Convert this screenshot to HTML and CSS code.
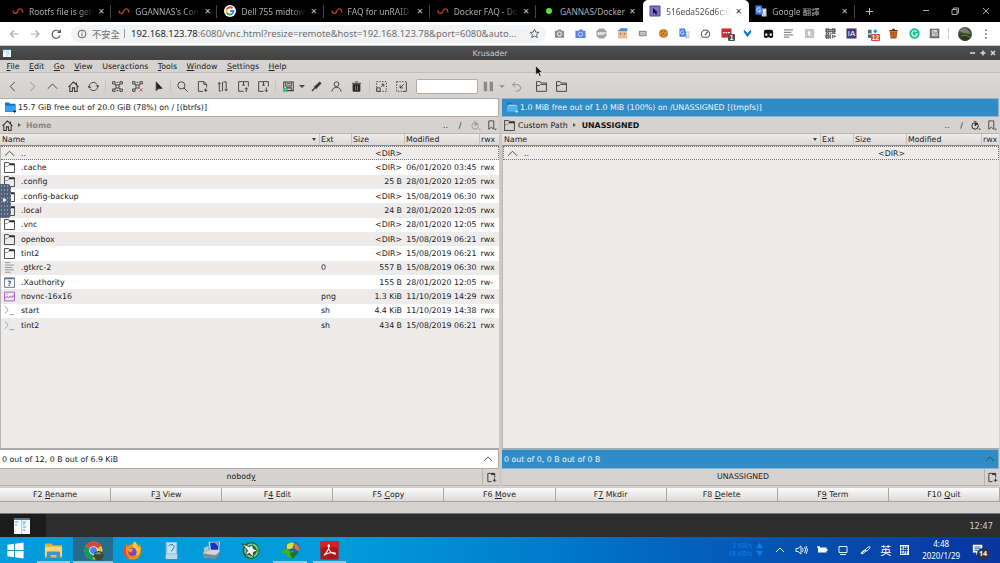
FILE: index.html
```html
<!DOCTYPE html>
<html lang="zh-Hant">
<head>
<meta charset="utf-8">
<title>Krusader</title>
<link rel="stylesheet" href="styles.css">
</head>
<body>
<svg class="defs" width="0" height="0">
  <symbol id="unraid" viewBox="0 0 12 12"><path d="M1 5.500c0 4 4 3.500 4.800 0.500s5-3 5 1.500" fill="none" stroke="#b5401f" stroke-width="1.300"/></symbol>
  <symbol id="folder" viewBox="0 0 12 12"><path d="M.6 11.500V.6h4.500l1 1.400h5.300v9.500z" fill="none" stroke="#3a3d40" stroke-width="1"/><path d="M6 1.500h5.500v2H5z" fill="#2b2e31"/><path d="M.8 5h3l1.500-2" fill="none" stroke="#777" stroke-width=".8"/></symbol>
  <symbol id="fold2" viewBox="0 0 12 12"><path d="M.6 11.300V.7h4l1 1.500h5.800v9.100zM.7 5h3l1.300-1.300h6.300" fill="none" stroke="#3a3d40" stroke-width="1"/></symbol>
  <symbol id="up" viewBox="0 0 12 12"><path d="M1 8.500 6 3.500l5 5" fill="none" stroke="#3a3d40" stroke-width="1"/></symbol>
  <symbol id="home" viewBox="0 0 12 12"><path d="M.6 6.500 6 1l5.400 5.500M2 5.500v5.900h2.800V7.500h2.400v3.900H10V5.500M9.200 1.500v2.500" fill="none" stroke="#303336" stroke-width="1.100"/></symbol>
  <symbol id="newtab" viewBox="0 0 12 12"><path d="M6 10.500H2v-9h7.500v4.500" fill="none" stroke="#333" stroke-width="1"/><path d="M5.500 1.500h4v1.700h-4z" fill="#333"/><path d="M9.300 7v4M7.300 9h4" stroke="#333"/></symbol>
  <symbol id="clock" viewBox="0 0 12 12"><circle cx="5.500" cy="6.500" r="3.500" fill="none" stroke="currentColor"/><path d="M5.500 6.500V3.500h3zM4 1.500h3" fill="currentColor" stroke="currentColor" stroke-width=".7"/><path d="M9 9.500h3L10.500 11z" fill="currentColor"/></symbol>
  <symbol id="mark" viewBox="0 0 12 12"><path d="M3 1h5.500v9L5.800 8 3 10z" fill="none" stroke="#444"/><path d="M9 9.500h3L10.500 11.300z" fill="#444"/></symbol>
  <symbol id="disk" viewBox="0 0 12 12"><path d="M0 .5h4.500l1 1.500h6V11H0z" fill="#1572c4"/><path d="M0 4h11.500v6.500H0z" fill="#39a0ee"/><path d="M8.500 9.500h4L10.500 12z" fill="#123"/></symbol>
  <symbol id="diskl" viewBox="0 0 12 12"><path d="M0 .5h4.500l1 1.500h6V5H0z" fill="#1a6fb5"/><path d="M0 3.500h11.500v7H0z" fill="#4db2f6"/><path d="M1.500 3.500h9" stroke="#d6edfb"/><path d="M8.500 9.500h4L10.500 12z" fill="#d6edfb"/></symbol>
  <symbol id="script" viewBox="0 0 12 12"><path d="M1 1.500l3.500 4L1 9.500M6 10.500h5" fill="none" stroke="#8793a0" stroke-width=".9"/></symbol>
  <symbol id="win" viewBox="0 0 16 16"><path fill="#f7fafc" d="M0 0h16v16H0z"/><path fill="#4b789f" d="M0 0h16v2H0z"/><path d="M7.700 2v14" stroke="#aabac6"/><path d="M1 4h3M1 7h2M9 4h3M9 6h2M9 9h3M9 12h2" stroke="#3ba1e0"/></symbol>
  <symbol id="trans" viewBox="0 0 12 12"><path d="M5 3.500h6.500v8H7z" fill="#cbd1d9"/><path d="M.5.5h6l2.500 9h-8.500z" fill="#4680ea"/><path d="M5.500 3.800a2 2 0 1 0 .2 1.700H4M7.500 6h3M9 5v1c0 2-1 3-2 3.500M8 7l2 2" stroke="#fff" fill="none" stroke-width=".8"/></symbol>
</svg>

<header class="tabs">
  <div class="tab"><svg class="i12"><use href="#unraid"/></svg><span>Rootfs file is gett</span><b>✕</b></div>
  <div class="tab"><svg class="i12"><use href="#unraid"/></svg><span>GGANNAS's Con</span><b>✕</b></div>
  <div class="tab"><svg class="i12" viewBox="0 0 12 12"><circle cx="6" cy="6" r="6" fill="#fff"/><g fill="none" stroke-width="1.800"><path d="M8.600 3.300A3.600 3.600 0 0 0 2.800 4.300" stroke="#ea4335"/><path d="M2.800 4.300a3.600 3.600 0 0 0 0 3.400" stroke="#fbbc05"/><path d="M2.800 7.700a3.600 3.600 0 0 0 5.400 1" stroke="#34a853"/><path d="M8.200 8.700A3.600 3.600 0 0 0 9.500 6H6" stroke="#4285f4"/></g></svg><span>Dell 755 midtowe</span><b>✕</b></div>
  <div class="tab"><svg class="i12"><use href="#unraid"/></svg><span>FAQ for unRAID</span><b>✕</b></div>
  <div class="tab"><svg class="i12"><use href="#unraid"/></svg><span>Docker FAQ - Do</span><b>✕</b></div>
  <div class="tab last"><svg class="i12" viewBox="0 0 12 12"><circle cx="6" cy="6" r="3" fill="#56e33a"/></svg><span>GANNAS/Docker</span><b>✕</b></div>
  <div class="tab active"><svg class="i12" viewBox="0 0 12 12"><path d="M1 1h10v10H1z" fill="#7a78c8" stroke="#4d4b96"/><path d="M4 3v6l1.500-1.500L7 10l1-.5-1-2h2z" fill="#111"/></svg><span>516eda526d6c:0</span><b>✕</b></div>
  <div class="tab"><svg class="i12"><use href="#trans"/></svg><span class="cjk">Google 翻譯</span><b>✕</b></div>
  <svg class="plus" viewBox="0 0 10 10"><path d="M5 1v8M1 5h8" stroke="#bbb" stroke-width="1.200"/></svg>
  <svg class="wc" viewBox="0 0 74 12"><g stroke="#bbb" fill="none" stroke-width=".9"><path d="M4 5.500h6M64 3l6 6M70 3l-6 6M33 4.500h5v5h-5zM34.500 4.500V3H39.500v5H38"/></g></svg>
</header>

<nav class="addr">
  <svg class="nav" viewBox="0 0 66 14"><g fill="none" stroke-width="1.200"><path d="M12.500 7H4.500M8 3.500 4.500 7 8 10.500M25 7h8M29.500 3.500 33 7l-3.500 3.500" stroke="#a9abad"/><path d="M53.500 5A4 4 0 1 0 54 8.500" stroke="#5b5e62"/></g><path d="M55 2v4h-4z" fill="#5b5e62"/></svg>
  <div class="omni">
    <svg class="info" viewBox="0 0 10 10"><circle cx="5" cy="5" r="3.900" fill="none" stroke="#5f6368"/><path d="M5 4.300v3M5 2.500v1" stroke="#5f6368"/></svg>
    <span class="unsafe">不安全</span><i></i>
    <span class="url"><em>192.168.123.78</em>:6080/vnc.html?resize=remote&amp;host=192.168.123.78&amp;port=6080&amp;auto...</span>
    <svg class="star" viewBox="0 0 12 12"><path d="M6 1.300l1.400 3.200 3.400.3-2.600 2.300.8 3.400L6 8.700l-3 1.800.8-3.400L1.200 4.800l3.400-.3z" fill="none" stroke="#55585c"/></svg>
  </div>
  <div class="ext">
    <svg viewBox="0 0 12 12"><path d="M1 3h2.500l1-1.500h3l1 1.500H11v7.500H1z" fill="#8d8d8d"/><circle cx="6" cy="6.500" r="2.200" fill="none" stroke="#fff"/></svg>
    <svg viewBox="0 0 12 12"><path d="M.5 3H4l1-1.500h3L9 3h2.500v8H.5z" fill="#5b82e4"/><circle cx="6" cy="6.800" r="2.300" fill="none" stroke="#cfe0ff"/></svg>
    <svg viewBox="0 0 12 12"><path d="M3.500.5h5l3 3v5l-3 3h-5l-3-3v-5z" fill="#a2a2a2"/><text x="6" y="7.800" class="abp">ABP</text></svg>
    <svg viewBox="0 0 12 12"><path d="M1 3h10v8.500H1z" fill="#e9bb98"/><path d="M1.500 2.500h9V1h-6V0" stroke="#3a8edb" stroke-width="1.500" fill="none"/><path d="M3.500 6.300h1M7.500 6.300h1" stroke="#222" stroke-width="1.300"/></svg>
    <svg viewBox="0 0 12 12"><rect x="2" y="3" width="8.500" height="6" rx="1" fill="#929292"/><path d="M4 5h4.500v2H4z" stroke="#fff" fill="none" stroke-width=".7"/></svg>
    <svg viewBox="0 0 12 12"><circle cx="6" cy="6" r="5" fill="#dc8a30"/><path d="M3.500 4h1M7 3.500h1M5.500 6h1M3.500 8h1M8 7.500h1" stroke="#693712" stroke-width="1.200"/></svg>
    <svg viewBox="0 0 12 12"><use href="#trans"/></svg>
    <svg viewBox="0 0 12 12"><path d="M3 10a4.500 4.500 0 1 1 6 0z" fill="none" stroke="#555" stroke-width="1.100"/><path d="M5.500 7.500 8.500 4" stroke="#444" stroke-width="1.200"/></svg>
    <span class="bdg dark"><svg viewBox="0 0 12 12"><path d="M.5.5h11v10H.5z" fill="#d32c2c"/><path d="M2 5h8" stroke="#fff" stroke-width="1.300" stroke-dasharray="2 .8"/></svg><b>1</b></span>
    <svg viewBox="0 0 12 12"><path d="M2.500 2.500 6 6l3.500-3.500v2L6 9.500 2.500 4.500z" fill="#1b79cc" stroke="#1b79cc"/></svg>
    <svg viewBox="0 0 12 12"><path d="M1 4q0-2 2-2h6q2 0 2 2v5q0 2-2 2H8l-1-1H5l-1 1H3q-2 0-2-2z" fill="#111"/><path d="M2.500 6h2.200v2.500H2.500zM7.300 6h2.200v2.500H7.300z" fill="#fff"/></svg>
    <svg viewBox="0 0 12 12"><path d="M1 2h10M1 4.700h8M1 7.400h10M1 10h6" stroke="#8b8f90" stroke-width="1.400"/></svg>
    <svg viewBox="0 0 12 12"><rect x="1" y="1" width="10" height="10" rx="1" fill="#c4c4c4"/><path d="M5 3v5M7.500 5.500 6 4.500v3l2 1" stroke="#fff" fill="none"/></svg>
    <svg viewBox="0 0 12 12"><path d="M1 1h3.500v3.500H1zM7.500 1H11v3.500H7.500zM1 7.500h3.500V11H1z" fill="#999" stroke="#333"/><path d="M6 1v5M1 6h4M7 6h5M6 7v5M8 7.500v4M10 8v3M8 9h4" stroke="#333" stroke-dasharray="1.500 .7"/></svg>
    <svg viewBox="0 0 12 12"><path d="M.5.5h11v11H.5z" fill="#4f3580"/><text x="6" y="9" class="ia">IA</text></svg>
    <span class="bdg red"><svg viewBox="0 0 12 12"><path d="M1 2h4v4H1zM1 7h4v4H1z" fill="#5c6873"/><path d="M6.500 3.500 9 1l2.500 2.500L9 6z" fill="#18a7e8"/></svg><b>12</b></span>
    <svg viewBox="0 0 12 12"><path d="M2 4h8l-.7 7.500H2.700z" fill="#a94f1c"/><path d="M1.500 3h9M4.500 1.500h3" stroke="#6e3211" stroke-width="1.500"/><path d="M4.500 5v5M7.500 5v5" stroke="#e0823c"/></svg>
    <svg viewBox="0 0 12 12"><circle cx="6" cy="6" r="5.600" fill="#15c39a"/><path d="M8.300 4A3 3 0 1 0 9 6.500H6.800" fill="none" stroke="#fff" stroke-width="1.200"/></svg>
    <svg viewBox="0 0 12 12"><path d="M.8.8h10.400v10.400H.8z" fill="#6b6b6b"/><path d="M9 2.800H3.500v2.700H9v3H3M3 7h4M5 4h4" fill="none" stroke="#fff" stroke-width=".9"/></svg>
  </div>
  <i class="vsep"></i>
  <svg class="ava" viewBox="0 0 14 14"><circle cx="7" cy="7" r="7" fill="#445238"/><path d="M1 4q5-6 10 0l1 3-6-1z" fill="#7d7d80"/><path d="M1 8q5-3 12 0-1 5-6 6-4-1-6-6" fill="#2c3b1f"/><path d="M3 9l5-1 4 2" stroke="#718e45" fill="none"/></svg>
  <svg class="dots" viewBox="0 0 4 12"><path d="M2 1.500v10" stroke="#55585c" stroke-width="1.500" stroke-dasharray="1.500 2.300"/></svg>
</nav>

<main class="app">
  <div class="title"><svg class="ticon"><use href="#win"/></svg><span>Krusader</span><svg class="tbtn" viewBox="0 0 28 8"><path d="M1 4h5M11.500 4h5M14 1.500v5M22 2l4 4M26 2l-4 4" stroke="#ddd" stroke-width="1.400"/></svg></div>
  <div class="menu"><span><u>F</u>ile</span><span><u>E</u>dit</span><span><u>G</u>o</span><span><u>V</u>iew</span><span>User<u>a</u>ctions</span><span><u>T</u>ools</span><span><u>W</u>indow</span><span><u>S</u>ettings</span><span><u>H</u>elp</span></div>

  <div class="tools">
    <div class="grp g1">
      <svg viewBox="0 0 12 12"><path d="M8.500 1 3.500 6l5 5"/></svg>
      <svg viewBox="0 0 12 12" class="dim"><path d="M3.500 1l5 5-5 5"/></svg>
      <svg viewBox="0 0 12 12"><path d="M.8 8.500 6 3.300l5.200 5.200"/></svg>
      <svg viewBox="0 0 12 12"><use href="#home"/></svg>
      <svg viewBox="0 0 12 12"><path d="M1.500 7.500A4.700 4.700 0 0 1 9.500 3M10.500 4.500A4.700 4.700 0 0 1 2.500 9M.2 5.500 1.500 7.800l2-1.500M11.800 6.500 10.500 4.300 8.500 5.700"/></svg>
    </div>
    <div class="grp g2">
      <svg viewBox="0 0 12 12"><path d="M.7.7h2.600v2.600H.7zM8.700.7h2.600v2.600H8.700zM.7 8.700h2.600v2.600H.7zM8.700 8.700h2.600v2.600H8.700zM4.300 4.300h3.400v3.400H4.300zM3.300 3.300l1 1M8.700 3.300l-1 1M3.300 8.700l1-1M8.700 8.700l-1-1M5 1.500h2M5 10.500h2"/></svg>
      <svg viewBox="0 0 12 12"><path d="M.7.7h2.600v2.600H.7zM8.700.7h2.600v2.600H8.700zM.7 8.700h2.600v2.600H.7zM4.300 4.300h3.400v3.400H4.300zM3.300 3.300l1 1M8.700 3.300l-1 1M3.300 8.700l1-1M5 1.500h2"/><path d="M8 8l3.500 3.500M11.500 8 8 11.500" style="stroke:#da4453"/></svg>
      <svg viewBox="0 0 12 12"><path d="M3.500 1v9.500l2-2 4.500-.5z" fill="#222"/></svg>
    </div>
    <div class="grp g3">
      <svg viewBox="0 0 12 12"><circle cx="4.800" cy="4.800" r="3.900"/><path d="M7.600 7.600 11.700 11.700"/></svg>
      <svg viewBox="0 0 12 12"><path d="M6.500 11.300H1.500V.7h6l3 3V7M7.500.7v3h3M9.500 8v4M7.500 10h4"/></svg>
      <svg viewBox="0 0 12 12"><path d="M2.500 2v9h2M1 3.500 2.500 1.500 4 3.500M7 1h3v9M8.500 9 10 11l1.500-2M6 11V1"/></svg>
      <svg viewBox="0 0 12 12"><path d="M6 11.300H.7V.7h10.600V6M6 .7v4M4.500 4.500h3M9 12V7.500M7.200 9 9 7.300 10.800 9"/></svg>
      <svg viewBox="0 0 12 12"><path d="M6 11.300H.7V.7h10.600V6M6 .7v4M4.500 4.500h3M9 7v4.500M7.200 10 9 11.700 10.800 10"/></svg>
    </div>
    <div class="grp g4">
      <svg viewBox="0 0 12 12"><path d="M.8 1h10.400v9.500H.8zM3 1v4.500h6V1M4 10V7.500h5V10M4.500 3h3" stroke-width="1.100"/><path d="M0 8h4.500v4H0z" fill="#2ecc71" style="stroke:none"/></svg>
      <s></s>
      <svg viewBox="0 0 12 12"><path d="M1 11l3-3M4 6.500 9.500 1.500 10.500 2.500 5.500 8z" fill="#222" stroke-width="1.500"/></svg>
      <svg viewBox="0 0 12 12"><circle cx="6" cy="3.500" r="2.600"/><path d="M1 11.500c0-6 10-6 10 0"/></svg>
      <svg viewBox="0 0 12 12"><path d="M2.200 3.500h7.600v7.700H2.200z" fill="#222"/><path d="M1 2.500h10M4.500 1h3"/><path d="M5 5v5M7 5v5" style="stroke:#888"/></svg>
    </div>
    <div class="grp g5">
      <svg viewBox="0 0 12 12"><path d="M.7.7h10.600v10.600H.7z" stroke-dasharray="1.500 1.500"/><path d="M.7 7.500h3.800v3.800H.7zM5.500 6.500 8.500 3.500M6 3.500h2.500V6"/></svg>
      <svg viewBox="0 0 12 12"><path d="M.7 .7h10M.7.7v10.600h6" stroke-dasharray="1.500 1.500"/><path d="M7.500 11.300h3.800V1M4.500 4.500v3h3M4.500 7.500l4-4"/></svg>
    </div>
    <div class="field"></div>
    <div class="grp g6">
      <svg viewBox="0 0 12 12"><path d="M.8.8h3.700v10.400H.8zM7.200.8h3.700v10.400H7.200z" fill="#8d8b89" style="stroke:none"/></svg>
      <s class="dim"></s>
      <svg viewBox="0 0 12 12" class="dim"><path d="M2 4h5a3.500 3.500 0 0 1 0 7H5M4.500 1 1.700 4l2.800 3"/></svg>
    </div>
    <div class="grp g7"><svg viewBox="0 0 12 12"><use href="#fold2"/></svg><svg viewBox="0 0 12 12"><use href="#fold2"/></svg></div>
  </div>

  <div class="panels">
    <section class="panel left">
      <div class="media"><svg class="i11"><use href="#disk"/></svg>15.7 GiB free out of 20.0 GiB (78%) on / [(btrfs)]</div>
      <div class="path"><svg class="i11"><use href="#home"/></svg><i></i><b>Home</b><div class="pt"><span>..</span><span>/</span><svg class="i11 off"><use href="#clock"/></svg><svg class="i11"><use href="#mark"/></svg></div></div>
      <div class="row head"><span>Name</span><span>Ext</span><span>Size</span><span>Modified</span><span>rwx</span></div>
      <div class="list">
        <div class="row cur"><svg class="i11"><use href="#up"/></svg><span>..</span><span></span><span>&lt;DIR&gt;</span><span></span><span></span></div>
        <div class="row"><svg class="i11"><use href="#folder"/></svg><span>.cache</span><span></span><span>&lt;DIR&gt;</span><span>06/01/2020 03:45</span><span>rwx</span></div>
        <div class="row"><svg class="i11"><use href="#folder"/></svg><span>.config</span><span></span><span>25 B</span><span>28/01/2020 12:05</span><span>rwx</span></div>
        <div class="row"><svg class="i11"><use href="#folder"/></svg><span>.config-backup</span><span></span><span>&lt;DIR&gt;</span><span>15/08/2019 06:30</span><span>rwx</span></div>
        <div class="row"><svg class="i11"><use href="#folder"/></svg><span>.local</span><span></span><span>24 B</span><span>28/01/2020 12:05</span><span>rwx</span></div>
        <div class="row"><svg class="i11"><use href="#folder"/></svg><span>.vnc</span><span></span><span>&lt;DIR&gt;</span><span>28/01/2020 12:05</span><span>rwx</span></div>
        <div class="row"><svg class="i11"><use href="#folder"/></svg><span>openbox</span><span></span><span>&lt;DIR&gt;</span><span>15/08/2019 06:21</span><span>rwx</span></div>
        <div class="row"><svg class="i11"><use href="#folder"/></svg><span>tint2</span><span></span><span>&lt;DIR&gt;</span><span>15/08/2019 06:21</span><span>rwx</span></div>
        <div class="row"><svg class="i11" viewBox="0 0 12 12"><path d="M1 .7h6M1 3.300h10M1 6h8M1 8.600h10M1 11.200h6" stroke="#7d8894" stroke-width=".9"/></svg><span>.gtkrc-2</span><span>0</span><span>557 B</span><span>15/08/2019 06:30</span><span>rwx</span></div>
        <div class="row"><svg class="i11" viewBox="0 0 12 12"><path d="M.6 1h10.800v10.300H.6z" fill="none" stroke="#60758c"/><path d="M.6 1h10.800v1.500H.6z" fill="#60758c"/><text x="6" y="10" class="q">?</text></svg><span>.Xauthority</span><span></span><span>155 B</span><span>28/01/2020 12:05</span><span>rw-</span></div>
        <div class="row"><svg class="i11" viewBox="0 0 12 12"><path d="M.6 1.200h10.800v9.600H.6zM.8 8l2.500-2 2 1.500 1.500-2L8.500 7l1.500-2 1.300 2M3 3.500h1" fill="none" stroke="#9b59d0"/></svg><span>novnc-16x16</span><span>png</span><span>1.3 KiB</span><span>11/10/2019 14:29</span><span>rwx</span></div>
        <div class="row"><svg class="i11"><use href="#script"/></svg><span>start</span><span>sh</span><span>4.4 KiB</span><span>11/10/2019 14:38</span><span>rwx</span></div>
        <div class="row"><svg class="i11"><use href="#script"/></svg><span>tint2</span><span>sh</span><span>434 B</span><span>15/08/2019 06:21</span><span>rwx</span></div>
      </div>
      <div class="stat"><span>0 out of 12, 0 B out of 6.9 KiB</span><svg class="i10"><use href="#up"/></svg></div>
      <div class="ptabs"><span>nobod<u>y</u></span><svg class="i11"><use href="#newtab"/></svg></div>
    </section>
    <div class="split"></div>
    <section class="panel right">
      <div class="media"><svg class="i11"><use href="#diskl"/></svg>1.0 MiB free out of 1.0 MiB (100%) on /UNASSIGNED [(tmpfs)]</div>
      <div class="path"><svg class="i11"><use href="#folder"/></svg><span>Custom Path</span><i></i><b>UNASSIGNED</b><div class="pt"><span>..</span><span>/</span><svg class="i11"><use href="#clock"/></svg><svg class="i11"><use href="#mark"/></svg></div></div>
      <div class="row head"><span>Name</span><span>Ext</span><span>Size</span><span>Modified</span><span>rwx</span></div>
      <div class="list">
        <div class="row cur"><svg class="i11"><use href="#up"/></svg><span>..</span><span></span><span>&lt;DIR&gt;</span><span></span><span></span></div>
      </div>
      <div class="stat"><span>0 out of 0, 0 B out of 0 B</span><svg class="i10"><use href="#up"/></svg></div>
      <div class="ptabs"><span>UNASSIGNED</span><svg class="i11"><use href="#newtab"/></svg></div>
    </section>
  </div>

  <div class="fkeys"><span>F2 <u>R</u>ename</span><span>F<u>3</u> View</span><span>F<u>4</u> Edit</span><span>F5 <u>C</u>opy</span><span>F6 <u>M</u>ove</span><span>F<u>7</u> Mkdir</span><span>F8 <u>D</u>elete</span><span>F<u>9</u> Term</span><span>F10 <u>Q</u>uit</span></div>
</main>

<div class="tint"><div><svg class="i16"><use href="#win"/></svg></div><span>12:47</span></div>

<footer class="task">
  <div class="apps">
    <div><svg viewBox="0 0 20 20"><path d="M1.500 4 8.500 3v6.500h-7zM9.500 2.800 18.500 1.500v8h-9zM1.500 10.500h7V17l-7-1zM9.500 10.500h9v8l-9-1.300z" fill="#fff"/></svg></div>
    <div class="run"><svg viewBox="0 0 20 20"><path d="M1 2.500h7l1.500 2H19v13H1z" fill="#e7ad2e"/><path d="M1 6h18v10H1z" fill="#fbd774"/><path d="M3 18v-6q0-1 1-1h12q1 0 1 1v6h-4v-3H7v3z" fill="#3d93d4"/></svg></div>
    <div class="run on"><svg viewBox="0 0 20 20"><circle cx="10" cy="10" r="9.500" fill="#f2c12e"/><path d="M10 10 1.800 5.200A9.500 9.500 0 0 1 18.200 5.200z" fill="#db4437"/><path d="M1.800 5.200A9.500 9.500 0 0 0 9 19.500L13 12z" fill="#109d58"/><circle cx="10" cy="10" r="4.500" fill="#fff"/><circle cx="10" cy="10" r="3.600" fill="#4285f4"/><circle cx="15.500" cy="15.500" r="5" fill="#3d472c"/><path d="M11.500 14q4-5 7 0z" fill="#8a8a82"/></svg></div>
    <div><svg viewBox="0 0 20 20"><path d="M10 3q2-1 1.500-2.500Q14 2 15 5q2 0 2-2 3 4 2 9-2 7.500-9 7.500T1 12Q.5 7 3.500 3l1 2.500z" fill="#ff8a16"/><path d="M3 9q-1 6 4 8.500Q2 18.500 1 12 1 7 3.500 3z" fill="#f5314e"/><path d="M12 .5q4 3 4.500 7L18 6q1 7-3 9-5 0-5-6t2-8.500" fill="#ffc83b"/><circle cx="10" cy="11.500" r="4.500" fill="#7b44cf"/><path d="M4 9q3-2 7 0-2 1-2 3-3 0-5-3" fill="#ff9a24"/></svg></div>
    <div><svg viewBox="0 0 20 20"><path d="M4 1h12v18H4z" fill="#82c6ee"/><path d="M5.500 2h9v11h-9z" fill="#c5e6f8"/><path d="M4 14h12v5H4z" fill="#c4d7e0"/><path d="M7 5q4-3 6 1l-3 5" stroke="#2370b2" fill="none"/></svg></div>
    <div><svg viewBox="0 0 20 20"><path d="M7 1l12-.5-1 10H8z" fill="#d7dce0"/><path d="M8.500 1.800l9.200-.5-.7 8H9.300z" fill="#1238b8"/><path d="M13 1.500h4.500l-.5 4z" fill="#7ea6ef"/><path d="M1 12l7-2h11l-3 5-13 3z" fill="#cfd5d9"/><path d="M1 13v4l13 2 4-4v-3l-4 3z" fill="#7d8a96"/><path d="M2 7l5-2v6l-5 2z" fill="#b8c2c9"/></svg></div>
    <div><svg viewBox="0 0 20 20"><circle cx="10.500" cy="10" r="9" fill="#176e35"/><circle cx="11" cy="10" r="6.500" fill="none" stroke="#75d67e" stroke-width="2"/><path d="M1 3 9 6l3-2 1 4 5 2-5 2v5l-4-4-5 2 3-5z" fill="#f0f0f0" stroke="#1b1b1b" stroke-width=".7"/></svg></div>
    <div class="run"><svg viewBox="0 0 20 20"><circle cx="12" cy="8" r="7.500" fill="#245cb5"/><path d="M6 4q4-4 8-2l-2 6-6 1z" fill="#d8dd3e"/><path d="M14 2q6 2 5 9l-5-3z" fill="#db7a34"/><path d="M1 10q6-4 9 1l3-1v9l-9-4 3-1Q5 11 1 14z" fill="#41b21d"/><path d="M9 12h9l-6 7z" fill="#177a16"/></svg></div>
    <div class="run"><svg viewBox="0 0 20 20"><path d="M.5.5h19v19H.5z" fill="#b91010"/><path d="M.5.5h19v7q-9-3-19 0z" fill="#d72020"/><path d="M4 15Q8 12 10 5q-1-2-1.500 0Q9 12 16 14q1-2-3-2-5 0-9 3" fill="none" stroke="#fff" stroke-width="1.100"/></svg></div>
  </div>
  <div class="net"><span>3 KB/s</span><span>▲</span><span>18 KB/s</span><span>▼</span></div>
  <svg class="tray" viewBox="0 0 100 14"><g fill="none" stroke="#fff" stroke-width=".9"><path d="M4 9l4-4 4 4M24 5.500h2l3-2.500v8l-3-2.500h-2zM30.500 5q1.500 2 0 4M32.500 4q2.500 3 0 6M34 3q3 4 0 8"/><path d="M71 3.500h-4v6h8v-6h-5M68 11.500h6"/><path d="M90 10l6-6q2-1 2 1l-3 3q-2 1-2-1M93 7q-3 1-4 3 0 2 3 0l2-3"/></g><path d="M46 4.500h8.500v5H46zM54.500 6h1v2h-1z" fill="#fff"/><path d="M45 4h3" stroke="#fff" stroke-width="1.500"/></svg>
  <span class="ime">英</span><span class="pin">拼</span>
  <div class="clk">4:48<br>2020/1/29</div>
  <div class="note"><svg viewBox="0 0 14 14"><path d="M1 1h11v9H7l-2 3v-3H1z" fill="#fff"/><path d="M3 3.500h7M3 5.500h7M3 7.500h4" stroke="#1b50a9"/></svg><b>14</b></div>
</footer>

<div class="handle"><i></i></div>
<svg class="cursor" viewBox="0 0 8 12"><path d="M.7.700v9L3 8l1.500 3.500 1.500-.7L4.600 7.500h2.700z" fill="#111" stroke="#fff" stroke-width=".5"/></svg>
</body>
</html>
```
FILE: styles.css
```css
* { box-sizing: border-box; }
body { margin: 0; width: 1000px; height: 563px; overflow: hidden; display: flex; flex-direction: column; font-family: "DejaVu Sans", sans-serif; font-size: 7.840px; color: #222; background: #d6d2d0; }
svg { display: block; flex: none; overflow: visible; }
.defs { position: absolute; }
.i10 { width: 10px; height: 10px; }
.i11 { width: 11px; height: 11px; }
.i12 { width: 12px; height: 12px; }
.i16 { width: 16px; height: 16px; }

/* browser tabs */
.tabs { height: 22px; background: #000; display: flex; align-items: center; padding-left: 6px; font-family: "Noto Sans", "Noto Sans CJK TC", sans-serif; font-size: 8.400px; color: #aaacae; flex: none; }
.tab { width: 106.200px; height: 22px; display: flex; align-items: center; padding-left: 6px; position: relative; }
.tab span { width: 66px; margin-left: 5px; white-space: nowrap; -webkit-mask-image: linear-gradient(90deg, #000 75%, transparent 98%); mask-image: linear-gradient(90deg, #000 75%, transparent 98%); }
.tab b { font: 8px "DejaVu Sans", sans-serif; color: #c8c8c8; margin-left: 3px; }
.tab:not(.last):not(.active) { background: linear-gradient(#444, #444) right 1px center / 1px 13px no-repeat; }
.tab.active { background: #fff; color: #505357; border-radius: 5px 5px 0 0; }
.tab.active b { color: #333; }
.tab.last span { -webkit-mask-image: none; mask-image: none; }
.plus { width: 9px; height: 9px; margin-left: 9px; }
.wc { width: 74px; height: 12px; margin-left: 45px; }

/* address bar */
.addr { height: 24px; background: #fff; border-bottom: 1px solid #c9c9c9; display: flex; align-items: center; flex: none; font-family: "Noto Sans", "Noto Sans CJK TC", sans-serif; }
.nav { width: 66px; height: 14px; margin-left: 6px; }
.omni { width: 475px; height: 18px; margin-left: -1px; border-radius: 9px; background: #f1f3f4; display: flex; align-items: center; padding-left: 6px; font-size: 9.420px; color: #6b6f73; white-space: nowrap; }
.info { width: 10px; height: 10px; }
.unsafe { margin-left: 5px; width: 29px; font-size: 9.300px; }
.omni i { width: 1px; height: 9px; background: #999; margin: 0 6px 0 3px; }
.url { width: 388px; }
.url em { font-style: normal; color: #25282b; }
.star { width: 11px; height: 11px; margin-left: 10px; }
.ext { margin-left: 3px; display: grid; grid-template-columns: repeat(19, 20.870px); justify-items: center; align-items: center; }
.ext svg { width: 11px; height: 11px; }
.abp { font: bold 4.500px "Liberation Sans", sans-serif; fill: #fff; text-anchor: middle; }
.ia { font: 8.500px "Liberation Sans", sans-serif; fill: #fff; text-anchor: middle; }
.q { font: bold 8px "DejaVu Sans", sans-serif; fill: #40576e; text-anchor: middle; }
.bdg { position: relative; }
.bdg b { position: absolute; left: 7px; top: 6px; font: bold 6.500px/7px "Liberation Sans", sans-serif; color: #fff; padding: 0 2px; border-radius: 1px; }
.bdg.dark b { background: #4b4f54; }
.bdg.red b { background: #e8403a; left: 4px; padding: 0 1px; }
.vsep { width: 1px; height: 11px; background: #ccc; margin-left: 3px; }
.ava { width: 14px; height: 14px; margin-left: 9px; }
.dots { width: 4px; height: 12px; margin-left: 12px; }

/* window frame, menu, toolbar */
.app { height: 468px; flex: none; display: flex; flex-direction: column; border-bottom: 1px solid #777; }
.title { height: 14px; flex: none; background: linear-gradient(#505050, #424242); color: #c9c9c9; display: flex; align-items: center; padding: 0 3px 0 3px; }
.title span { flex: 1; text-align: center; padding-left: 0; }
.ticon { width: 8px; height: 8px; }
.tbtn { width: 28px; height: 8px; }
.menu { height: 13px; flex: none; display: flex; align-items: center; gap: 9.500px; padding-left: 6.500px; border-bottom: 1px solid #c2bebc; }
u { text-underline-offset: 1px; text-decoration-thickness: .7px; }
.tools { height: 24px; flex: none; display: flex; align-items: center; background: linear-gradient(#dedad8, #d4d0ce); padding-left: 2px; padding-top: 3px; }
.grp { display: grid; grid-auto-flow: column; justify-items: center; align-items: center; grid-auto-columns: 20.300px; }
.grp svg { width: 11px; height: 11px; fill: none; stroke: #3a3d40; stroke-width: 1; }
.grp svg.dim { stroke: #8d8b89; }
.grp s { border: 3px solid transparent; border-top-color: #444; border-bottom: 0; }
.grp s.dim { border-top-color: #999; }
.g1, .g2, .g3, .g4 { border-right: 1px solid #c5c1bf; }
.g1 { width: 104px; }
.g2 { width: 65px; padding-left: 1.500px; }
.g3 { width: 105px; padding-left: 1px; }
.g4 { width: 94px; padding-left: 2px; grid-template-columns: 20px 8px; }
.g5 { width: 42px; padding-left: 1px; }
.field { width: 62px; height: 15px; border: 1px solid #b0acaa; border-radius: 2px; background: #fff; margin-left: 4px; }
.g6 { grid-template-columns: 20px 8px; }
.g7 { margin-left: 5px; }

/* file panels */
.panels { height: 389px; flex: none; display: flex; padding-top: 1px; }
.panel { width: 499px; display: flex; flex-direction: column; }
.split { width: 3px; background: #cdc9c7; }
.right { width: 497px; }
.media { height: 19px; display: flex; align-items: center; padding-left: 5px; gap: 2px; background: #fff; border: 1px solid #aeaaa8; border-left: 0; flex: none; }
.right .media, .right .stat { background: #308cc6; color: #edf5fb; border-color: #8ab3cd; }
.path { height: 16px; display: flex; align-items: center; padding-left: 2px; flex: none; }
.path b { color: #8b8886; }
.path i { border: 2.500px solid transparent; border-left: 3px solid #555; border-right: 0; margin: 0 5px 0 5px; }
.right .path i { margin-right: 6px; }
.right .path span { margin-left: 3px; }
.right .path b { color: #111; }
.pt { margin-left: auto; display: grid; grid-template-columns: 15px 14px 17px 15px; justify-items: center; align-items: center; margin-right: 0; }
.off { color: #999; }
.row { display: grid; align-items: center; height: 14.330px; white-space: nowrap; }
.head { grid-template-columns: 319px 32px 53px 75px 19px; height: 13px; background: linear-gradient(#eeedec, #dad7d5); border-bottom: 1px solid #8d8a88; border-top: 1px solid #bbb7b5; flex: none; }
.head span { border-left: 1px solid #c6c3c1; padding-left: 1px; line-height: 11px; }
.head span:first-child { border: 0; padding-left: 2px; position: relative; }
.head span:first-child::after { content: ""; position: absolute; right: 3px; top: 4px; border: 2.500px solid transparent; border-top: 3px solid #444; border-bottom: 0; }
.right .head { grid-template-columns: 318px 33px 53px 75px 18px; }
.list { flex: 1; background: #eeeceb; border-left: 1px solid #bbb7b5; border-bottom: 1px solid #aaa; }
.list .row { grid-template-columns: 19px 300px 32px 51px 73.500px 20px; padding-left: 0; }
.list .row svg { margin-left: 3px; }
.list .row span:nth-child(2) { padding-left: 1px; }
.list .row span:nth-child(3) { padding-left: 1px; }
.list .row span:nth-child(4) { text-align: right; padding-right: 1px; }
.list .row span:nth-child(5) { text-align: right; }
.list .row span:nth-child(6) { padding-left: 4px; }
.list .row:nth-child(even) { background: #fff; }
.list .cur { border: 1px dotted #777; border-left: 0; }
.right .list .cur { border-left: 1px dotted #777; }
.stat { height: 20px; flex: none; display: flex; align-items: center; justify-content: space-between; padding: 0 5px 0 2px; background: #fff; border: 1px solid #aeaaa8; border-left: 0; }
.right .stat { padding-right: 3px; }
.ptabs { height: 17px; flex: none; display: flex; align-items: center; border-bottom: 1px solid #b5b1af; padding-right: 2px; }
.ptabs span { flex: 1; text-align: center; border-right: 1px solid #b5b1af; line-height: 16px; margin-right: 3px; }
.right .ptabs { padding-right: 1px; }
.right .ptabs span { margin-right: 2px; }
.fkeys { flex: none; display: grid; grid-template-columns: repeat(9, 1fr); height: 15px; margin-top: 1px; text-align: center; line-height: 13px; }
.fkeys span { background: linear-gradient(#fafafa, #dedbd9); border: 1px solid #a9a6a4; border-width: 1px 1px 1px 0; border-top-color: #ccc; }

/* remote desktop panel */
.tint { height: 23px; flex: none; background: #2d2d2d; display: flex; justify-content: space-between; align-items: center; color: #ccc; padding-right: 7px; font-size: 8.200px; }
.tint div { width: 46px; height: 23px; background: #1c1c1c; padding: 4px 0 0 14px; }

/* host taskbar */
.task { height: 26px; flex: none; display: flex; align-items: center; color: #fff; background: linear-gradient(90deg, #039cdb 0, #039ad9 35%, #0083cf 50%, #0066bf 66%, #0650b0 80%, #0835a1 100%); font-family: "Noto Sans", "Noto Sans CJK TC", sans-serif; }
.apps { display: grid; grid-template-columns: 34px repeat(8, 39.400px); height: 26px; }
.apps div { display: flex; align-items: center; justify-content: center; position: relative; }
.apps div:first-child { padding-right: 3px; }
.apps svg { width: 19px; height: 19px; }
.run::after { content: ""; position: absolute; left: 3px; right: 3px; bottom: 0; height: 2px; background: #8fc7e4; }
.apps .on { background: #256b8c; }
.apps .on::after { left: 0; right: 0; }
.net { width: 80px; margin-left: 334px; display: grid; grid-template-columns: 69px 11px; justify-items: end; font-size: 6.800px; line-height: 8px; color: #0a80ea; }
.tray { width: 100px; height: 14px; margin-left: 9px; }
.ime { font-size: 11px; margin-left: 8px; }
.pin { font-size: 8px; line-height: 9px; background: #fff; color: #0745a6; width: 9px; height: 10px; margin-left: 9px; font-weight: bold; }
.clk { width: 48px; margin-left: 8px; text-align: center; font-size: 8px; line-height: 12px; }
.note { margin-left: 7px; position: relative; }
.note svg { width: 12px; height: 12px; }
.note b { position: absolute; left: 5px; top: 4px; width: 12px; height: 12px; border-radius: 6px; background: #2b3345; font: bold 7px/12px "Noto Sans", sans-serif; text-align: center; }

/* overlays */
.handle { position: absolute; left: 0; top: 184px; width: 11px; height: 34px; border-radius: 0 4px 4px 0; background: radial-gradient(circle, #8b99ae .5px, transparent .8px) 0 0 / 3px 4px, #536178; }
.handle i { position: absolute; left: 3px; top: 14px; border: 2.500px solid transparent; border-left: 4px solid #fff; border-right: 0; }
.cursor { position: absolute; left: 535px; top: 65px; width: 8px; height: 12px; }
```
